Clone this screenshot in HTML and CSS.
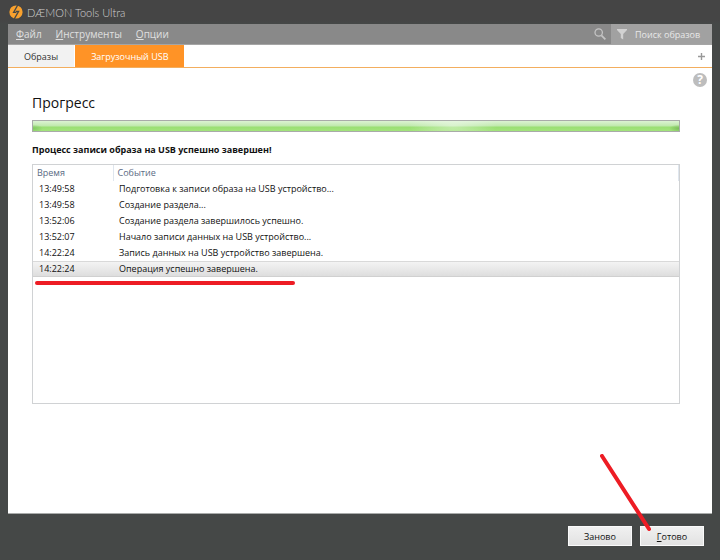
FILE: index.html
```html
<!DOCTYPE html>
<html lang="ru">
<head>
  <meta charset="UTF-8">
  <meta name="viewport" content="width=device-width, initial-scale=1.0">
  <title>DAEMON Tools Ultra</title>
  <link rel="stylesheet" href="styles.css">
</head>
<body>

  <header class="titlebar">
    <svg class="logo" viewBox="0 0 14 14" width="14" height="14" aria-hidden="true">
      <circle cx="7" cy="7" r="6.6" fill="#f9a12e"/>
      <path d="M8.8 0 4.6 7.4H7.4M5.2 14 9.6 6.4H6.8" fill="none" stroke="#454847" stroke-width="1.3"/>
    </svg>
    <h1>DÆMON Tools Ultra</h1>
  </header>

  <div class="window">
    <nav class="menubar">
      <button type="button"><u>Ф</u>айл</button>
      <button type="button"><u>И</u>нструменты</button>
      <button type="button"><u>О</u>пции</button>
      <button type="button" class="search-button" aria-label="Поиск">
        <svg viewBox="0 0 12 12" width="12" height="12" fill="none" stroke="#c4c4c4">
          <circle cx="4.7" cy="4.5" r="3.7" stroke-width="1.3"/>
          <path d="M7.4 7.3 11.4 11.4" stroke-width="1.8"/>
        </svg>
      </button>
      <div class="search">
        <svg viewBox="0 0 10 12" width="10" height="12" aria-hidden="true">
          <path d="M0 1H10V2L6.2 6V11.5L3.8 10V6L0 2Z" fill="#d2d2d2"/>
        </svg>
        <input type="text" placeholder="Поиск образов" aria-label="Поиск образов">
      </div>
    </nav>

    <div class="tabs">
      <button type="button" class="tab">Образы</button>
      <button type="button" class="tab active">Загрузочный USB</button>
      <button type="button" class="add-tab" aria-label="Добавить">
        <svg viewBox="0 0 7 7" width="7" height="7" stroke="#999" stroke-width="1.4">
          <path d="M3.5 0V7M0 3.5H7"/>
        </svg>
      </button>
    </div>

    <main class="content">
      <button type="button" class="help" aria-label="Справка">?</button>
      <h2>Прогресс</h2>
      <progress value="100" max="100" aria-label="Прогресс"></progress>
      <p class="status">Процесс записи образа на USB успешно завершен!</p>

      <div class="log">
        <table>
          <thead>
            <tr><th class="time">Время</th><th>Событие</th></tr>
          </thead>
          <tbody>
            <tr><td>13:49:58</td><td>Подготовка к записи образа на USB устройство...</td></tr>
            <tr><td>13:49:58</td><td>Создание раздела...</td></tr>
            <tr><td>13:52:06</td><td>Создание раздела завершилось успешно.</td></tr>
            <tr><td>13:52:07</td><td>Начало записи данных на USB устройство...</td></tr>
            <tr><td>14:22:24</td><td>Запись данных на USB устройство завершена.</td></tr>
            <tr class="selected"><td>14:22:24</td><td>Операция успешно завершена.</td></tr>
          </tbody>
        </table>
        <div class="underline"></div>
      </div>
    </main>
  </div>

  <footer class="actions">
    <button type="button">Заново</button>
    <button type="button"><u>Г</u>отово</button>
    <svg class="pointer" viewBox="0 0 52 78" width="52" height="78" aria-hidden="true">
      <path d="M2 2 49 75" stroke="#ed1c24" stroke-width="4" stroke-linecap="round"/>
    </svg>
  </footer>

</body>
</html>
```
FILE: styles.css
```css
* {
  box-sizing: border-box;
}

body {
  margin: 0;
  min-height: 100vh;
  display: flex;
  flex-direction: column;
  background: #454847;
  font-family: "Open Sans", "Noto Sans", sans-serif;
  font-size: 9px;
  color: #111;
}

button {
  margin: 0;
  padding: 0;
  border: none;
  background: none;
  font: inherit;
  color: inherit;
}

.titlebar {
  display: flex;
  align-items: center;
  gap: 4px;
  height: 24px;
  padding: 0 9px;
  background: linear-gradient(to bottom, #454545 20px, #454847);
}

.titlebar h1 {
  margin: 0;
  font-family: Lato, sans-serif;
  font-size: 11px;
  font-weight: 300;
  color: #d0d0d0;
}

.window {
  flex: 1;
  display: flex;
  flex-direction: column;
  margin: 0 8px;
  background: #fff;
  border-bottom: 1px solid #a9abaa;
}

.menubar {
  display: flex;
  align-items: center;
  gap: 14px;
  height: 21px;
  padding-left: 8px;
  background: #898989;
  border-bottom: 1px solid #a5a5a5;
  font-size: 10px;
  color: #e0e0e0;
}

.search-button {
  display: flex;
  margin-left: auto;
  margin-right: -9px;
}

.search {
  display: flex;
  align-items: center;
  gap: 8px;
  width: 101px;
  height: 20px;
  padding-left: 6px;
  background: #a1a1a1;
  font-size: 9px;
}

.search svg {
  flex: none;
}

.search input {
  flex: 1;
  min-width: 0;
  padding: 0;
  border: none;
  outline: none;
  background: none;
  font: inherit;
  color: #e8e8e8;
}

.search input::placeholder {
  color: #e8e8e8;
}

.tabs {
  display: flex;
  gap: 1px;
  height: 23px;
  border-bottom: 1px solid #f3ae5e;
}

.tab {
  padding: 0 16px;
  background: #f2f2f2;
  color: #333;
}

.tab.active {
  background: #ff9326;
  color: #fff;
}

.add-tab {
  display: flex;
  align-items: center;
  margin-left: auto;
  padding: 0 7px;
}

.content {
  position: relative;
  flex: 1;
  display: flex;
  flex-direction: column;
  padding: 25px 32px 109px 24px;
}

.help {
  position: absolute;
  top: 5px;
  right: 5px;
  width: 14px;
  height: 14px;
  border-radius: 50%;
  background: #bdbdbd;
  font-size: 12px;
  font-weight: 700;
  line-height: 14px;
  color: #fff;
}

h2 {
  margin: 0 0 7px;
  font-size: 14px;
  font-weight: 400;
  line-height: 20px;
}

progress {
  display: block;
  width: 100%;
  height: 12px;
  border: 1px solid #a9aba9;
  appearance: none;
  background: #fff;
}

progress::-webkit-progress-bar {
  background: none;
}

progress::-webkit-progress-value {
  background:
    radial-gradient(ellipse 10px 4px at 100% 75%, #7cbd5c, transparent),
    radial-gradient(ellipse 10px 4px at 0 75%, #83c864, transparent),
    radial-gradient(ellipse 44px 14px at 65% 50%, rgba(255, 255, 255, 0.4), transparent),
    linear-gradient(to bottom, #dcf3d3, #bfe9ac 5px, #9adf73 6px, #a3e47c);
}

.status {
  margin: 12px 0 8px;
  font-weight: 700;
  line-height: 12px;
}

.log {
  position: relative;
  flex: 1;
  border: 1px solid #d0d2d4;
}

table {
  width: 100%;
  table-layout: fixed;
  border-collapse: collapse;
}

th {
  height: 16px;
  padding: 0 4px;
  font-weight: 400;
  line-height: 16px;
  text-align: left;
  color: #5b6b84;
  border-right: 1px solid #dfe6ee;
}

.time {
  width: 80px;
}

td {
  height: 16px;
  padding: 0 6px;
  line-height: 16px;
  white-space: nowrap;
}

.selected td {
  background: linear-gradient(to bottom, #f5f5f5, #dcdcdc);
  box-shadow: inset 0 1px #d9d9d9, inset 0 -1px #d0d0d0;
}

.underline {
  position: absolute;
  top: 116px;
  left: 2px;
  width: 260px;
  height: 4px;
  border-radius: 2px;
  background: #ed1c24;
}

.actions {
  position: relative;
  display: flex;
  justify-content: flex-end;
  gap: 8px;
  padding: 12px 16px 14px;
}

.actions button {
  width: 64px;
  height: 20px;
  border: 1px solid #fafafa;
  background: linear-gradient(to bottom, #f0f0f0, #e2e2e2);
}

.pointer {
  position: absolute;
  right: 68px;
  bottom: 28px;
}
```
